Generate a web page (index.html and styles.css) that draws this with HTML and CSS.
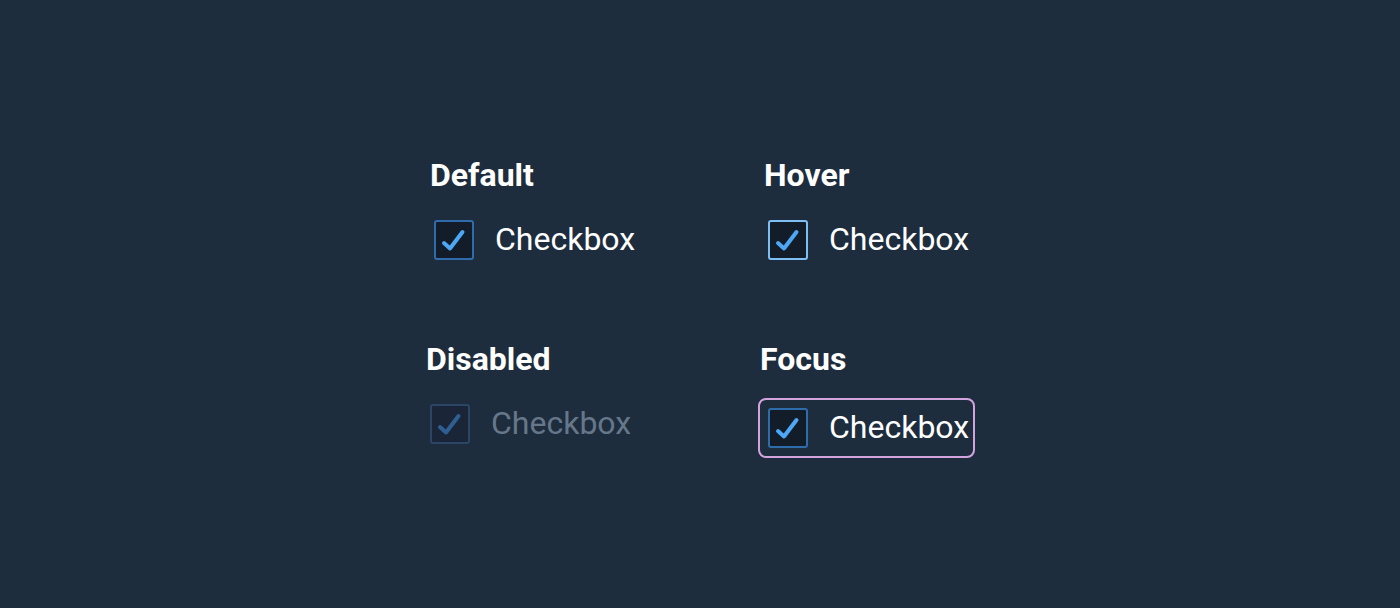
FILE: index.html
```html
<!DOCTYPE html>
<html lang="en">
<head>
<meta charset="utf-8">
<title>Checkbox states</title>
<link rel="stylesheet" href="styles.css">
</head>
<body>
<main class="stage">
  <div class="grid">
    <section class="state">
      <h2 class="state-title">Default</h2>
      <label class="cb">
        <span class="cb-box">
          <svg class="cb-check" viewBox="0 0 36 36"><path d="M8 21 L14 26.5 L26.5 10"/></svg>
        </span>
        <span class="cb-text">Checkbox</span>
      </label>
    </section>
    <section class="state">
      <h2 class="state-title">Hover</h2>
      <label class="cb cb-hover">
        <span class="cb-box">
          <svg class="cb-check" viewBox="0 0 36 36"><path d="M8 21 L14 26.5 L26.5 10"/></svg>
        </span>
        <span class="cb-text">Checkbox</span>
      </label>
    </section>
    <section class="state state-shift">
      <h2 class="state-title">Disabled</h2>
      <label class="cb cb-disabled">
        <span class="cb-box">
          <svg class="cb-check" viewBox="0 0 36 36"><path d="M8 21 L14 26.5 L26.5 10"/></svg>
        </span>
        <span class="cb-text">Checkbox</span>
      </label>
    </section>
    <section class="state state-shift">
      <h2 class="state-title">Focus</h2>
      <label class="cb cb-focus">
        <span class="cb-box">
          <svg class="cb-check" viewBox="0 0 36 36"><path d="M8 21 L14 26.5 L26.5 10"/></svg>
        </span>
        <span class="cb-text">Checkbox</span>
      </label>
    </section>
  </div>
</main>
</body>
</html>
```
FILE: styles.css
```css
html, body {
  margin: 0;
  padding: 0;
}
body {
  background: #1e2d3e;
  font-family: Roboto, "Liberation Sans", sans-serif;
  color: #ffffff;
  width: 1400px;
  height: 608px;
  overflow: hidden;
}
.stage {
  display: flex;
  justify-content: center;
  padding-top: 155px;
}
.grid {
  display: grid;
  grid-template-columns: 334px 210px;
  row-gap: 79px;
  margin-left: 4px;
}
.state {
  display: flex;
  flex-direction: column;
  align-items: flex-start;
  gap: 25px;
}
.state-shift {
  margin-left: -4px;
}
.state-title {
  margin: 0;
  font-size: 32px;
  line-height: 40px;
  font-weight: 700;
  color: #ffffff;
}
.cb {
  display: flex;
  align-items: center;
  gap: 21px;
  padding-left: 4px;
  height: 40px;
}
.cb-box {
  width: 40px;
  height: 40px;
  box-sizing: border-box;
  border: 2px solid #2f6cab;
  border-radius: 3px;
  background: #131c29;
  display: flex;
  align-items: center;
  justify-content: center;
}
.cb-check {
  width: 36px;
  height: 36px;
  fill: none;
  stroke: #4ea7f4;
  stroke-width: 4;
  stroke-linecap: round;
  stroke-linejoin: round;
}
.cb-text {
  font-size: 32px;
  line-height: 38px;
  padding-bottom: 2px;
  font-weight: 400;
  color: #ffffff;
}
.cb-hover .cb-box {
  border-color: #7dbff3;
}
.cb-disabled .cb-box {
  border-color: #2a4565;
  background: #1a2637;
}
.cb-disabled .cb-check {
  stroke: #2f5f92;
}
.cb-disabled .cb-text {
  color: #66778a;
}
.cb-focus {
  height: auto;
  padding: 8px 4px 8px 8px;
  border: 2px solid #d3a3df;
  border-radius: 8px;
  margin-left: -2px;
  margin-top: -6px;
}
```
